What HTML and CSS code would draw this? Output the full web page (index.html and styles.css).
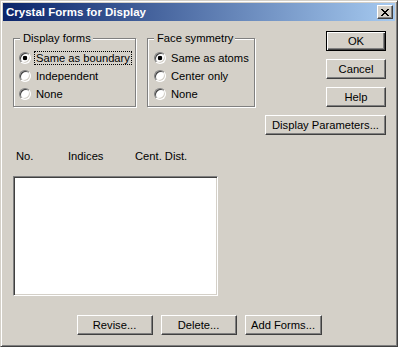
FILE: index.html
```html
<!DOCTYPE html>
<html>
<head>
<meta charset="utf-8">
<title>Crystal Forms for Display</title>
<link rel="stylesheet" href="styles.css">
</head>
<body>
<div class="window">
  <div class="titlebar">
    <span class="title">Crystal Forms for Display</span>
    <button class="close" aria-label="Close">
      <svg width="8" height="7" viewBox="0 0 8 7" shape-rendering="crispEdges">
        <path fill="#000" d="M0 0h2v1H0zM6 0h2v1H6zM1 1h2v1H1zM5 1h2v1H5zM2 2h4v1H2zM3 3h2v1H3zM2 4h4v1H2zM1 5h2v1H1zM5 5h2v1H5zM0 6h2v1H0zM6 6h2v1H6z"/>
      </svg>
    </button>
  </div>
  <div class="content">
    <div class="left">
      <div class="groups">
        <div class="group g1">
          <div class="group-label">Display forms</div>
          <div class="radio-row"><span class="radio checked"></span><span class="rlabel focus">Same as boundary</span></div>
          <div class="radio-row"><span class="radio"></span><span class="rlabel">Independent</span></div>
          <div class="radio-row"><span class="radio"></span><span class="rlabel">None</span></div>
        </div>
        <div class="group g2">
          <div class="group-label">Face symmetry</div>
          <div class="radio-row"><span class="radio checked"></span><span class="rlabel">Same as atoms</span></div>
          <div class="radio-row"><span class="radio"></span><span class="rlabel">Center only</span></div>
          <div class="radio-row"><span class="radio"></span><span class="rlabel">None</span></div>
        </div>
      </div>
      <div class="headers"><span>No.</span><span>Indices</span><span>Cent. Dist.</span></div>
      <div class="listbox"></div>
    </div>
    <div class="right">
      <button class="btn default w60">OK</button>
      <button class="btn w60">Cancel</button>
      <button class="btn w60">Help</button>
      <button class="btn w121">Display Parameters...</button>
    </div>
  </div>
  <div class="bottom">
    <button class="btn w76">Revise...</button>
    <button class="btn w76">Delete...</button>
    <button class="btn w77">Add Forms...</button>
  </div>
</div>
</body>
</html>
```
FILE: styles.css
```css
html, body {
  margin: 0;
  padding: 0;
  background: #d4d0c8;
}
body {
  font-family: "Liberation Sans", Arial, sans-serif;
  font-size: 11.2px;
  color: #000;
}
.window {
  width: 398px;
  height: 347px;
  box-sizing: border-box;
  border: 1px solid;
  border-color: #d4d0c8 #404040 #404040 #d4d0c8;
  padding: 2px;
  background: #d4d0c8;
  box-shadow: inset 1px 1px #fff, inset -1px -1px #808080;
}
.titlebar {
  height: 18px;
  display: flex;
  align-items: flex-start;
  background: linear-gradient(to right, #0a246a, #a6caf0);
}
.title {
  flex: 1;
  line-height: 18px;
  padding-left: 3px;
  font-weight: bold;
  color: #fff;
  font-size: 11.5px;
}
.close {
  margin: 2px 2px 0 0;
  width: 16px;
  height: 14px;
  padding: 0;
  box-sizing: border-box;
  display: flex;
  align-items: center;
  justify-content: center;
  background: #d4d0c8;
  border: 1px solid;
  border-color: #fff #404040 #404040 #fff;
  box-shadow: inset -1px -1px #808080;
}
.close svg { display: block; }
.content {
  display: flex;
  padding: 0 9px 0 10px;
}
.left {
  flex: 1;
  display: flex;
  flex-direction: column;
}
.groups {
  display: flex;
  gap: 11px;
  margin-top: 17px;
}
.group {
  height: 69px;
  box-sizing: border-box;
  border: 1px solid #808080;
  box-shadow: inset 1px 1px #fff, 1px 1px #fff;
  display: flex;
  flex-direction: column;
}
.g1 { width: 123px; }
.g2 { width: 108px; }
.group-label {
  align-self: flex-start;
  margin: -8px 0 4px 6px;
  padding: 0 2px 0 3px;
  line-height: 14px;
  background: #d4d0c8;
}
.radio-row {
  height: 18px;
  display: flex;
  align-items: center;
  padding-left: 5px;
}
.g2 .radio-row { padding-left: 6px; }
.radio {
  width: 12px;
  height: 12px;
  box-sizing: border-box;
  border-radius: 50%;
  border: 1px solid;
  border-color: #808080 #fff #fff #808080;
  box-shadow: inset 1px 1px #404040, inset -1px -1px #d4d0c8;
  background: #fff;
  flex: none;
}
.radio.checked {
  background: radial-gradient(circle, #000 0 2px, #fff 2.6px);
}
.rlabel {
  margin-left: 3px;
  padding: 0 1px;
  line-height: 12px;
  border: 1px solid transparent;
  white-space: nowrap;
}
.rlabel.focus {
  border: 1px dotted #000;
}
.headers {
  display: grid;
  grid-template-columns: 52px 67px auto;
  padding-left: 3px;
  margin-top: 42px;
  line-height: 14px;
}
.listbox {
  margin-top: 13px;
  width: 205px;
  height: 120px;
  box-sizing: border-box;
  background: #fff;
  border: 1px solid;
  border-color: #808080 #fff #fff #808080;
  box-shadow: inset 1px 1px #404040, inset -1px -1px #d4d0c8;
}
.right {
  display: flex;
  flex-direction: column;
  align-items: flex-end;
  gap: 8px;
  padding-top: 10px;
}
.btn {
  height: 20px;
  box-sizing: border-box;
  padding: 0;
  font-family: inherit;
  font-size: 11.2px;
  line-height: 16px;
  color: #000;
  background: #d4d0c8;
  border: 1px solid;
  border-color: #fff #404040 #404040 #fff;
  box-shadow: inset -1px -1px #808080;
  white-space: nowrap;
}
.btn.default {
  border: 1px solid #000;
  box-shadow: inset 1px 1px #fff, inset -1px -1px #404040, inset -2px -2px #808080;
}
.w60 { width: 60px; }
.w121 { width: 121px; }
.w76 { width: 76px; }
.w77 { width: 77px; }
.bottom {
  display: flex;
  justify-content: center;
  gap: 8px;
  margin-top: 19px;
}
```
